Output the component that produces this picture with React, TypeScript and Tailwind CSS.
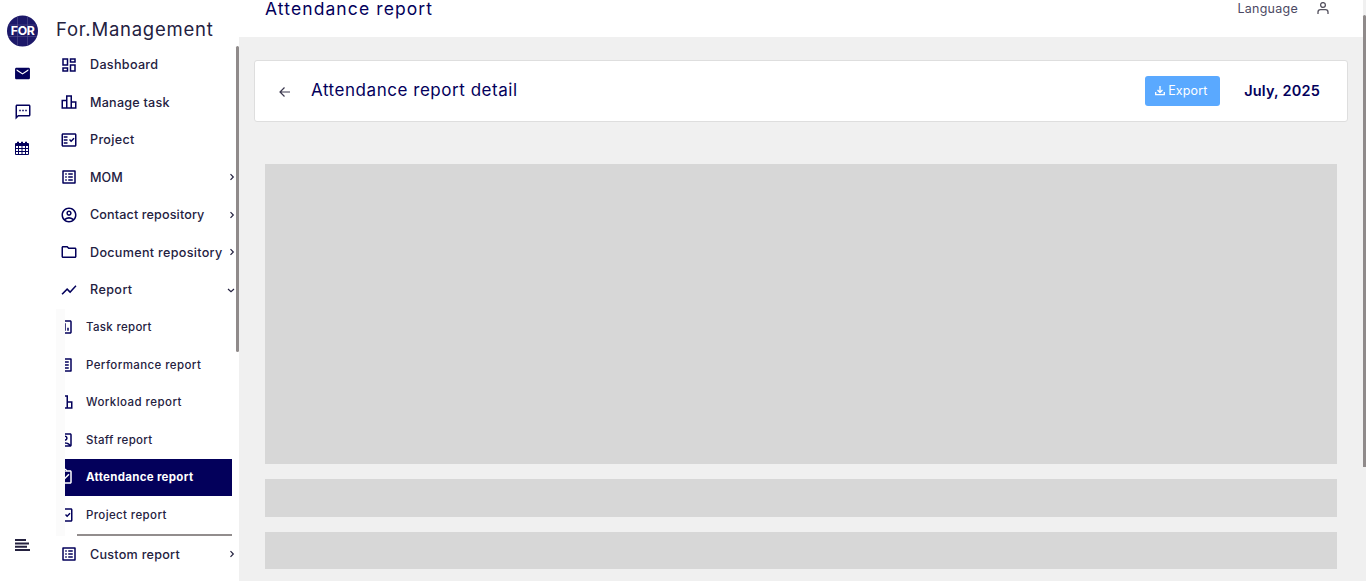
import React from "react";
import {
  MdOutlineDashboard, MdOutlineLeaderboard, MdOutlineFactCheck, MdOutlineListAlt, MdOutlineAccountCircle,
  MdOutlineFolder, MdShowChart, MdOutlineAssessment, MdOutlineAccountBox, MdOutlineAssignmentTurnedIn, MdOutlineSms,
} from "react-icons/md";
import { IoMdMail } from "react-icons/io";

type Icon = React.ComponentType<{ className?: string }>;
type Item = { label: string; icon: Icon; track: string; arrow?: "right" | "down" };

const top: Item[] = [
  { label: "Dashboard", icon: MdOutlineDashboard, track: "tracking-[0.3px]" },
  { label: "Manage task", icon: MdOutlineLeaderboard, track: "tracking-[0.22px]" },
  { label: "Project", icon: MdOutlineFactCheck, track: "tracking-[0.3px]" },
  { label: "MOM", icon: MdOutlineListAlt, track: "tracking-[0.1px]", arrow: "right" },
  { label: "Contact repository", icon: MdOutlineAccountCircle, track: "tracking-[0.12px]", arrow: "right" },
  { label: "Document repository", icon: MdOutlineFolder, track: "tracking-[0.3px]", arrow: "right" },
  { label: "Report", icon: MdShowChart, track: "tracking-[0.4px]", arrow: "down" },
];
const sub: Item[] = [
  { label: "Task report", icon: MdOutlineAssessment, track: "tracking-[0.3px]" },
  { label: "Performance report", icon: MdOutlineListAlt, track: "tracking-[0.4px]" },
  { label: "Workload report", icon: MdOutlineLeaderboard, track: "tracking-[0.44px]" },
  { label: "Staff report", icon: MdOutlineAccountBox, track: "tracking-[0.3px]" },
  { label: "Attendance report", icon: MdOutlineAssignmentTurnedIn, track: "tracking-[0.3px]" },
  { label: "Project report", icon: MdOutlineFactCheck, track: "tracking-[0.38px]" },
];

function Chevron({ down }: { down?: boolean }) {
  return (
    <svg viewBox="0 0 8 8" className="size-2 fill-none stroke-[#24213f] stroke-[1.2]">
      {down ? <path d="M1 3 4 5.700 7 3" /> : <path d="M2.500 1.200 5.300 4 2.500 6.800" />}
    </svg>
  );
}

function Row({ item }: { item: Item }) {
  const I = item.icon;
  return (
    <div className="flex h-[37.5px] shrink-0 items-center pl-[5px]">
      <I className="size-[18px] shrink-0 text-[#03005b]" />
      <span className={`ml-3 whitespace-nowrap pt-[2px] text-[12.6px] font-medium ${item.track}`}>{item.label}</span>
      {item.arrow && <span className={item.arrow === "down" ? "ml-auto mr-[1px] pt-px" : "ml-auto"}><Chevron down={item.arrow === "down"} /></span>}
    </div>
  );
}

export default function App() {
  return (
    <div className="flex h-[581px] w-full overflow-hidden bg-white font-['Inter',sans-serif] text-[#24213f]">
      <aside className="flex w-[55px] shrink-0 flex-col pl-[7px] pt-[15px]">
        <svg viewBox="0 0 32 32" className="size-8">
          <circle cx="15.5" cy="16" r="15.5" fill="#1c1869" />
          <path d="M10.5 1v30M20.5 1v30M1 10h29M1 21.5h29" stroke="#56538e" strokeWidth=".6" />
          <text x="15.8" y="20.4" textAnchor="middle" textLength="24" fontSize="12.3" fontWeight="700" fill="#fff">FOR</text>
        </svg>
        <IoMdMail className="ml-[7px] mt-[18px] size-[17px] text-[#03005b]" />
        <MdOutlineSms className="ml-[7px] mt-[21px] size-[18px] text-[#03005b]" />
        <svg viewBox="0 0 14 15" className="ml-[8px] mt-[20px] h-[15px] w-[14px] text-[#03005b]">
          <path fill="currentColor" fillRule="evenodd" d="M1 2h1V1Q3 0 4 1v1h2V1Q7 0 8 1v1h2V1Q11 0 12 1v1h1q1 0 1 1v10q0 1-1 1H1q-1 0-1-1V3q0-1 1-1ZM1 5v2h2V5Zm3 0v2h2.500V5Zm3.500 0v2H10V5ZM11 5v2h2V5ZM1 8v2h2V8Zm3 0v2h2.500V8Zm3.500 0v2H10V8ZM11 8v2h2V8ZM1 11v2h2v-2Zm3 0v2h2.500v-2Zm3.500 0v2H10v-2ZM11 11v2h2v-2Z" />
        </svg>
        <svg viewBox="0 0 16 12" className="mb-[30px] ml-2 mt-auto h-3 w-4 stroke-[#24213f] stroke-[2]">
          <path d="M0 1h11M0 4.400h14M0 7.700h12M0 11h15" />
        </svg>
      </aside>

      <nav className="flex w-[184px] shrink-0 flex-col">
        <h1 className="h-[46px] shrink-0 whitespace-nowrap pl-[1px] pt-[16px] text-[18.5px] leading-[26px] tracking-[0.75px]">For.Management</h1>
        <div className="flex min-h-0 flex-1">
          <div className="flex w-[181px] shrink-0 flex-col">
            {top.map((item) => <Row key={item.label} item={item} />)}
            <div className="ml-[1px] mr-1 h-[227px] shrink-0 border-l-[9px] border-[#fbfbfb]">
              {sub.map((item) => {
                const on = item.label === "Attendance report";
                const I = item.icon;
                return (
                  <div key={item.label} className={`flex h-[37.5px] w-[167px] items-center overflow-hidden ${on ? "bg-[#03005b] font-bold text-white" : "font-medium"}`}>
                    <I className={`-ml-[9px] size-[18px] shrink-0 ${on ? "text-white" : "text-[#03005b]"}`} />
                    <span className={`ml-3 whitespace-nowrap pt-px text-[11.5px] ${item.track}`}>{item.label}</span>
                  </div>
                );
              })}
              <div className="ml-3 h-[2px] w-[155px] bg-[#928d8d]" />
            </div>
            <Row item={{ label: "Custom report", icon: MdOutlineListAlt, track: "tracking-[0.25px]", arrow: "right" }} />
          </div>
          <div className="h-[306px] w-[3px] rounded-full bg-[#8f8a8a]" />
        </div>
      </nav>

      <main className="flex min-w-0 flex-1 flex-col bg-[#f0f0f0]">
        <header className="flex h-[37px] shrink-0 justify-between bg-white pl-[26px]">
          <h2 className="text-[17.5px] leading-[18px] tracking-[1.1px] text-[#03005b]">Attendance report</h2>
          <div className="flex">
            <div className="flex h-[18px] items-center pr-[34px] text-[12.5px] text-[#4c4963]">
              <span className="tracking-[0.25px]">Language</span>
              <svg viewBox="0 0 12 12" className="ml-[19px] mt-[-2px] size-3 fill-none stroke-[#55525f] stroke-[1.3]"><circle cx="6" cy="3" r="2.400" /><path d="M1 12V10Q1 7.600 3.500 7.600h5Q11 7.600 11 10v2" /></svg>
            </div>
            <div className="w-[3px] bg-[#f0f0f0]" />
          </div>
        </header>
        <div className="flex min-h-0 flex-1">
          <div className="min-w-0 flex-1">
            <section className="ml-[15px] mr-[15px] mt-[23px] flex h-[62px] items-center rounded-[3px] border border-[#dedede] bg-white pl-6 pr-[27px] text-[#03005b]">
              <svg viewBox="0 0 12 12" className="mt-px size-3 fill-none stroke-[#3b384e] stroke-[1.2]"><path d="M11 6H1M5.500 1.500 1 6l4.500 4.500" /></svg>
              <h3 className="ml-5 text-[17px] tracking-[0.54px]">Attendance report detail</h3>
              <button className="ml-auto flex h-[30px] w-[75px] items-center rounded-[3px] bg-[#5aa9ff] pl-[10px] text-[12.5px] tracking-[0.15px] text-white">
                <svg viewBox="0 0 10 10" className="mr-[3px] size-[10px] fill-none stroke-white stroke-[1.3]"><path d="M5 0v6M2.500 4 5 6.500 7.500 4M.7 6v2.700h8.600V6" /></svg>
                Export
              </button>
              <span className="ml-6 text-[14.5px] font-semibold tracking-[0.2px]">July, 2025</span>
            </section>
            <div className="ml-[26px] mr-[26px] mt-[42px] flex flex-col gap-[15px]">
              <div className="h-[300px] bg-[#d7d7d7]" />
              <div className="h-[38px] bg-[#d7d7d7]" />
              <div className="h-[37px] bg-[#d7d7d7]" />
            </div>
          </div>
          <div className="w-[3px]" />
        </div>
      </main>
      <div className="absolute right-0 top-[15px] h-[452px] w-[3px] rounded-t-full bg-[#8f8a8a]" />
    </div>
  );
}
